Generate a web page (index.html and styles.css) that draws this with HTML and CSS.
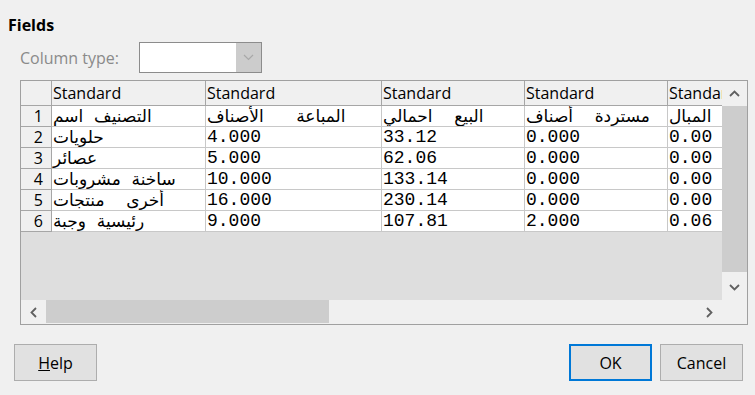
FILE: index.html
```html
<!DOCTYPE html>
<html lang="en">
<head>
    <meta charset="UTF-8">
    <title>Fields</title>
    <link rel="stylesheet" href="styles.css">
</head>
<body>
<div class="dialog">
    <h1 class="title">Fields</h1>
    <div class="type-row">
        <span class="type-label">Column type:</span>
        <div class="combo">
            <span class="combo-field"></span>
            <span class="combo-btn">
                <svg width="11" height="7" viewBox="0 0 11 7"><polyline points="1,1 5.5,5.5 10,1" fill="none" stroke="#a8a8a8" stroke-width="1.2"/></svg>
            </span>
        </div>
    </div>

    <div class="grid-frame">
        <div class="viewport">
            <div class="sheet">
                <div class="cell head corner"></div>
                <div class="cell head">Standard</div>
                <div class="cell head">Standard</div>
                <div class="cell head">Standard</div>
                <div class="cell head">Standard</div>
                <div class="cell head">Standard</div>

                <div class="cell num">1</div>
                <div class="cell"><span class="ar">التصنيف</span> <span class="ar">اسم</span></div>
                <div class="cell"><span class="ar">المباعة</span>   <span class="ar">الأصناف</span></div>
                <div class="cell"><span class="ar">البيع</span>  <span class="ar">احمالي</span></div>
                <div class="cell"><span class="ar">مستردة</span>  <span class="ar">أصناف</span></div>
                <div class="cell"><span class="ar">المبال</span></div>

                <div class="cell num">2</div>
                <div class="cell"><span class="ar">حلويات</span></div>
                <div class="cell">4.000</div>
                <div class="cell">33.12</div>
                <div class="cell">0.000</div>
                <div class="cell">0.00</div>

                <div class="cell num">3</div>
                <div class="cell"><span class="ar">عصائر</span></div>
                <div class="cell">5.000</div>
                <div class="cell">62.06</div>
                <div class="cell">0.000</div>
                <div class="cell">0.00</div>

                <div class="cell num">4</div>
                <div class="cell"><span class="ar">ساخنة</span> <span class="ar">مشروبات</span></div>
                <div class="cell">10.000</div>
                <div class="cell">133.14</div>
                <div class="cell">0.000</div>
                <div class="cell">0.00</div>

                <div class="cell num">5</div>
                <div class="cell"><span class="ar">أخرى</span>  <span class="ar">منتجات</span></div>
                <div class="cell">16.000</div>
                <div class="cell">230.14</div>
                <div class="cell">0.000</div>
                <div class="cell">0.00</div>

                <div class="cell num">6</div>
                <div class="cell"><span class="ar">رئيسية</span> <span class="ar">وجبة</span></div>
                <div class="cell">9.000</div>
                <div class="cell">107.81</div>
                <div class="cell">2.000</div>
                <div class="cell">0.06</div>
            </div>
        </div>

        <div class="vscroll">
            <span class="sb-btn">
                <svg width="11" height="7" viewBox="0 0 11 7"><polyline points="1,6 5.5,1.5 10,6" fill="none" stroke="#606060" stroke-width="1.8"/></svg>
            </span>
            <span class="sb-thumb v"></span>
            <span class="sb-track"></span>
            <span class="sb-btn">
                <svg width="11" height="7" viewBox="0 0 11 7"><polyline points="1,1 5.5,5.5 10,1" fill="none" stroke="#606060" stroke-width="1.8"/></svg>
            </span>
        </div>

        <div class="hscroll">
            <span class="sb-btn">
                <svg width="7" height="11" viewBox="0 0 7 11"><polyline points="6,1 1.5,5.5 6,10" fill="none" stroke="#606060" stroke-width="1.8"/></svg>
            </span>
            <span class="sb-thumb h"></span>
            <span class="sb-track"></span>
            <span class="sb-btn">
                <svg width="7" height="11" viewBox="0 0 7 11"><polyline points="1,1 5.5,5.5 1,10" fill="none" stroke="#606060" stroke-width="1.8"/></svg>
            </span>
        </div>

        <div class="sb-corner"></div>
    </div>

    <div class="buttons">
        <button class="btn"><u>H</u>elp</button>
        <div class="btn-group">
            <button class="btn default">OK</button>
            <button class="btn">Cancel</button>
        </div>
    </div>
</div>
</body>
</html>
```

FILE: styles.css
```css
body {
    margin: 0;
    width: 755px;
    height: 395px;
    overflow: hidden;
    background-color: #f0f0f0;
    font-family: "Open Sans", "Noto Sans", sans-serif;
    font-size: 16px;
    color: #000;
}

.title {
    margin: 0;
    padding: 15px 0 0 8px;
    font-size: 16px;
    font-weight: 700;
    line-height: 20px;
}

.type-row {
    display: flex;
    align-items: center;
    height: 31px;
    margin-top: 7px;
    padding-left: 20px;
}

.type-label {
    width: 119px;
    color: #8a8a8a;
    line-height: 22px;
}

.combo {
    display: flex;
    width: 123px;
    height: 31px;
    box-sizing: border-box;
    border: 1px solid #8c8c8c;
    background-color: #fff;
}

.combo-field {
    flex: 1;
}

.combo-btn {
    display: flex;
    align-items: center;
    justify-content: center;
    width: 25px;
    background-color: #cccccc;
}

/* table frame */
.grid-frame {
    display: grid;
    grid-template-columns: 701px 25px;
    grid-template-rows: 219px 24px;
    width: 728px;
    height: 245px;
    box-sizing: border-box;
    margin: 7px 0 0 20px;
    border: 1px solid #a0a0a0;
    background-color: #f0f0f0;
}

.viewport {
    overflow: hidden;
    background-color: #dedede;
}

.sheet {
    display: grid;
    grid-template-columns: 31px 154px 176px 143px 143px 120px;
    grid-template-rows: 25px repeat(6, 21px);
    width: max-content;
}

.cell {
    box-sizing: border-box;
    padding-left: 1px;
    border-right: 1px solid #c8c8c8;
    border-bottom: 1px solid #c8c8c8;
    background-color: #fff;
    overflow: hidden;
    white-space: pre;
    font-family: "Liberation Mono", "DejaVu Sans Mono", monospace;
    font-size: 18px;
    line-height: 20px;
}

.cell .ar {
    font-family: "DejaVu Sans", sans-serif;
    font-size: 17px;
}

.cell.head {
    background-color: #f0f0f0;
    border-color: #a6a6a6;
    font-family: "Open Sans", "Noto Sans", sans-serif;
    font-size: 16px;
    line-height: 24px;
}

.cell.num {
    padding: 0 8px 0 0;
    text-align: right;
    background-color: #f0f0f0;
    border-color: #a6a6a6;
    font-family: "Open Sans", "Noto Sans", sans-serif;
    font-size: 16px;
}

/* scrollbars */
.vscroll,
.hscroll {
    display: flex;
    background-color: #f0f0f0;
}

.vscroll {
    flex-direction: column;
}

.sb-btn {
    display: flex;
    align-items: center;
    justify-content: center;
    flex: 0 0 25px;
}

.sb-track {
    flex: 1;
}

.sb-thumb {
    background-color: #cdcdcd;
}

.sb-thumb.v {
    flex: 0 0 166px;
}

.sb-thumb.h {
    flex: 0 0 283px;
    margin-bottom: 1px;
}

/* buttons */
.buttons {
    display: flex;
    justify-content: space-between;
    margin-top: 19px;
    padding: 0 12px 0 14px;
}

.btn-group {
    display: flex;
    gap: 8px;
}

.btn {
    width: 83px;
    height: 37px;
    padding: 0;
    background-color: #e1e1e1;
    border: 1px solid #adadad;
    font-family: "Open Sans", "Noto Sans", sans-serif;
    font-size: 16px;
    color: #000;
}

.btn.default {
    border: 2px solid #0078d7;
}
```
